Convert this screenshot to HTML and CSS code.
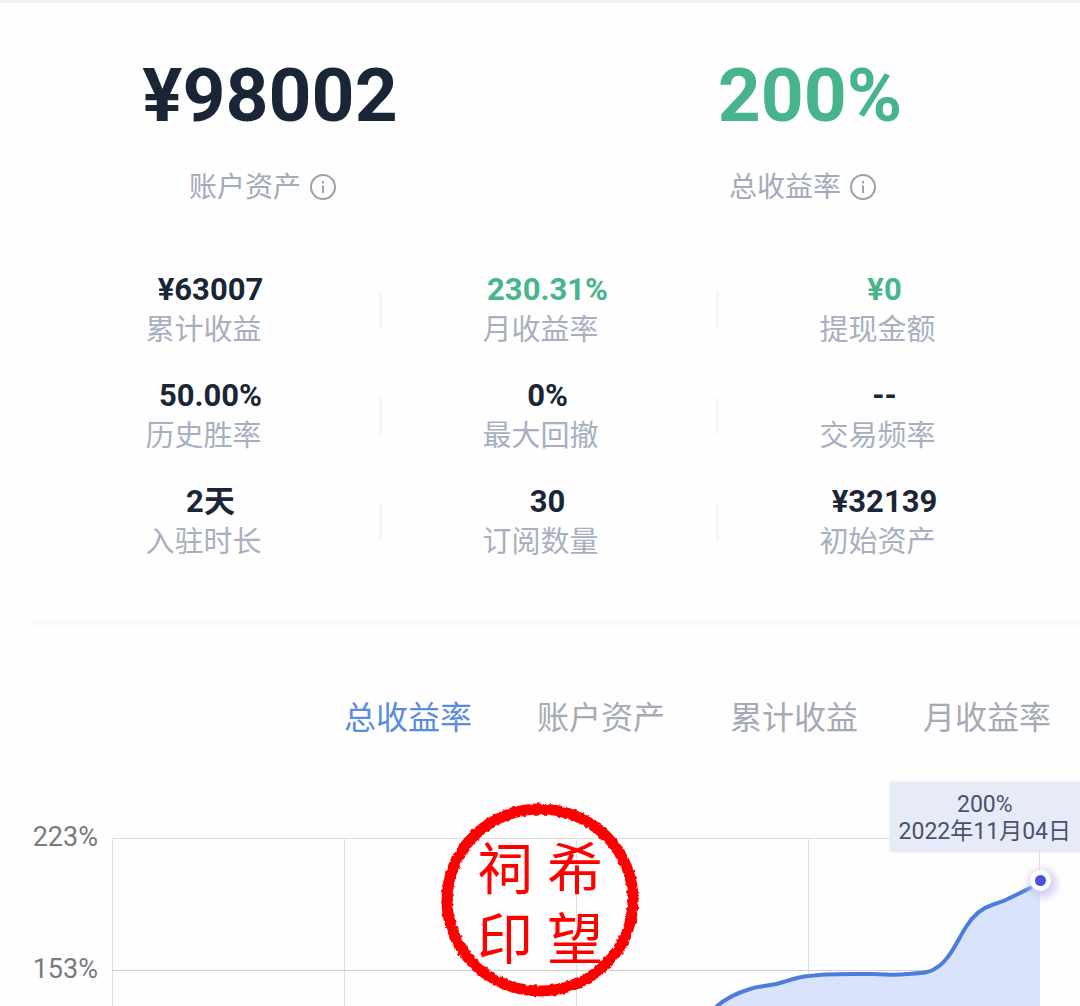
FILE: index.html
```html
<!DOCTYPE html>
<html lang="zh-CN">
<head>
<meta charset="utf-8">
<meta name="viewport" content="width=device-width, initial-scale=1">
<title>账户资产</title>
<link rel="stylesheet" href="styles.css">
</head>
<body>
<main class="page">
  <section class="hero">
    <div class="hero-item">
      <strong class="hero-value">¥98002</strong>
      <span class="hero-label">账户资产
        <svg class="info" viewBox="0 0 28 28" aria-hidden="true"><circle cx="14" cy="13" r="12"/><path d="M14 11.500v7.500M14 7v2.500"/></svg>
      </span>
    </div>
    <div class="hero-item">
      <strong class="hero-value up">200%</strong>
      <span class="hero-label">总收益率
        <svg class="info" viewBox="0 0 28 28" aria-hidden="true"><circle cx="14" cy="13" r="12"/><path d="M14 11.500v7.500M14 7v2.500"/></svg>
      </span>
    </div>
  </section>

  <dl class="stats">
    <div class="stat"><dd class="stat-value">¥63007</dd><dt class="stat-label">累计收益</dt></div>
    <div class="stat"><dd class="stat-value up">230.31%</dd><dt class="stat-label">月收益率</dt></div>
    <div class="stat"><dd class="stat-value up">¥0</dd><dt class="stat-label">提现金额</dt></div>
    <div class="stat"><dd class="stat-value">50.00%</dd><dt class="stat-label">历史胜率</dt></div>
    <div class="stat"><dd class="stat-value">0%</dd><dt class="stat-label">最大回撤</dt></div>
    <div class="stat"><dd class="stat-value">--</dd><dt class="stat-label">交易频率</dt></div>
    <div class="stat"><dd class="stat-value">2天</dd><dt class="stat-label">入驻时长</dt></div>
    <div class="stat"><dd class="stat-value">30</dd><dt class="stat-label">订阅数量</dt></div>
    <div class="stat"><dd class="stat-value">¥32139</dd><dt class="stat-label">初始资产</dt></div>
  </dl>

  <hr class="separator">

  <nav class="tabs">
    <button class="tab active" type="button">总收益率</button>
    <button class="tab" type="button">账户资产</button>
    <button class="tab" type="button">累计收益</button>
    <button class="tab" type="button">月收益率</button>
  </nav>

  <section class="chart">
    <div class="axis"><span>223%</span><span>153%</span></div>
    <div class="plot">
      <svg class="plot-svg" viewBox="0 0 928 168" preserveAspectRatio="none" aria-hidden="true">
        <g class="grid">
          <path d="M0 .5H928M.5 0V168M232.500 0V168M464.500 0V168M696.500 0V168M927.500 0V168"/>
          <path class="grid-strong" d="M0 132.500H928"/>
        </g>
        <path class="area" d="M604 169C613 161 625 155 638 151C647 148 655 148 664 146C676 143 684 139 697 138C716 135 741 136 760 136C775 136 780 138 795 136C810 135 818 135 824 130C837 123 845 103 854 89C862 76 870 70 880 67C890 64 895 62 904 57L928 45V169Z"/>
        <path class="curve" d="M604 169C613 161 625 155 638 151C647 148 655 148 664 146C676 143 684 139 697 138C716 135 741 136 760 136C775 136 780 138 795 136C810 135 818 135 824 130C837 123 845 103 854 89C862 76 870 70 880 67C890 64 895 62 904 57L928 45"/>
      </svg>
      <span class="point"></span>
      <div class="tooltip"><span>200%</span><span>2022年11月04日</span></div>
    </div>
    <div class="seal">
      <svg class="seal-ring" viewBox="0 0 204 204" aria-hidden="true">
        <filter id="rough" x="-5%" y="-5%" width="110%" height="110%">
          <feTurbulence type="fractalNoise" baseFrequency="0.25" numOctaves="2" seed="4"/>
          <feDisplacementMap in="SourceGraphic" scale="4" xChannelSelector="R" yChannelSelector="G"/>
        </filter>
        <ellipse cx="102" cy="102" rx="93" ry="91" filter="url(#rough)"/>
      </svg>
      <span>祠</span><span>希</span><span>印</span><span>望</span>
    </div>
  </section>
</main>
</body>
</html>
```
FILE: styles.css
```css
* { box-sizing: border-box; }

body {
  margin: 0;
  background: #fefefe;
  color: #1a2636;
  font-family: Roboto, "Noto Sans CJK SC", sans-serif;
}

.page {
  border-top: 3px solid #eff0f4;
  overflow: hidden;
}

.up { color: #48b48c; }

.hero {
  display: grid;
  grid-template-columns: 1fr 1fr;
  padding-top: 52px;
}

.hero-item {
  display: flex;
  flex-direction: column;
  align-items: center;
  gap: 33px;
}

.hero-value {
  font-size: 75px;
  line-height: 80px;
  font-weight: 700;
}

.hero-label {
  display: flex;
  align-items: center;
  gap: 8px;
  padding-right: 14px;
  color: #a3aab9;
  font-size: 28px;
  line-height: 40px;
}

.info {
  width: 28px;
  height: 28px;
  fill: none;
  stroke: #9b9fa9;
  stroke-width: 2;
}

.stats {
  display: grid;
  grid-template-columns: repeat(3, 1fr);
  row-gap: 26px;
  margin: 62px 27px 56px 42px;
}

.stat {
  display: flex;
  flex-direction: column;
  align-items: center;
}

.stat:not(:nth-child(3n + 1)) {
  background: linear-gradient(#f5f5f8, #f5f5f8) no-repeat left center / 3px 36px;
}

.stat-value {
  margin: 0;
  font-size: 31px;
  line-height: 40px;
  font-weight: 700;
}

.stat-label {
  padding-right: 14px;
  color: #a8afc0;
  font-size: 29px;
  line-height: 40px;
}

.separator {
  height: 8px;
  margin: 0 0 0 32px;
  border: 0;
  background: #fbfbfc;
}

.tabs {
  display: flex;
  justify-content: flex-end;
  gap: 65px;
  padding: 72px 29px 0 0;
}

.tab {
  padding: 0;
  border: 0;
  background: none;
  color: #a5aab5;
  font: 400 32px/40px Roboto, "Noto Sans CJK SC", sans-serif;
}

.tab.active { color: #5b8ae0; }

.chart {
  position: relative;
  display: flex;
  gap: 14px;
  margin-top: 100px;
  padding-right: 40px;
}

.axis {
  width: 98px;
  margin-top: -21px;
  display: flex;
  flex-direction: column;
  gap: 92px;
  color: #777a82;
  font-size: 27px;
  line-height: 40px;
  text-align: right;
}

.plot {
  position: relative;
  flex: 1;
  height: 168px;
}

.plot-svg {
  display: block;
  width: 100%;
  height: 100%;
}

.plot-svg path { vector-effect: non-scaling-stroke; }

.grid { fill: none; stroke: #dedee0; }
.grid-strong { stroke: #cfcfd1; }
.area { fill: #d7e3fc; fill-opacity: 0.95; }
.curve { fill: none; stroke: #4c7ddd; stroke-width: 4; }

.point {
  position: absolute;
  top: 32px;
  right: -11px;
  width: 21px;
  height: 21px;
  border: 5px solid #fff;
  border-radius: 50%;
  background: #4b50e0;
  box-shadow: 2px 3px 10px 3px #cfc8f2;
}

.tooltip {
  position: absolute;
  top: -56px;
  right: -40px;
  display: flex;
  flex-direction: column;
  align-items: center;
  padding: 9px 9px 7px;
  background: #e7ebf8;
  box-shadow: 0 0 3px #e7ebf8;
  color: #47536b;
  font-size: 23px;
  line-height: 27px;
}

.seal {
  position: absolute;
  top: -40px;
  left: 50%;
  margin-left: -102px;
  width: 204px;
  height: 204px;
  padding: 32px;
  display: grid;
  grid-template-columns: 1fr 1fr;
  color: #f00;
  font-family: "Noto Sans CJK SC", sans-serif;
  font-size: 56px;
  line-height: 70px;
  text-align: center;
}

.seal-ring {
  position: absolute;
  inset: 0;
  fill: none;
  stroke: #f00;
  stroke-width: 11;
}
```
